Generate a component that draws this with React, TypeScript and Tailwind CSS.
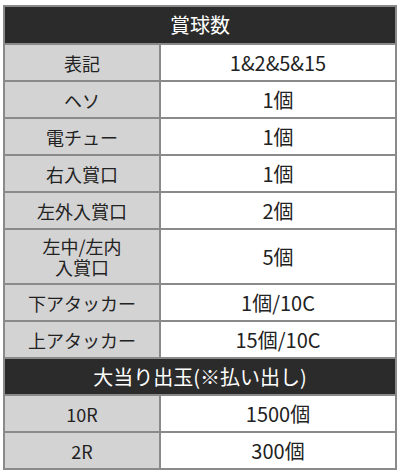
import React from "react";

const rows1: { label: React.ReactNode; value: string; tall?: boolean }[] = [
  { label: "表記", value: "1&2&5&15" },
  { label: "ヘソ", value: "1個" },
  { label: "電チュー", value: "1個" },
  { label: "右入賞口", value: "1個" },
  { label: "左外入賞口", value: "2個" },
  {
    label: (
      <span className="flex flex-col items-center gap-[1px] leading-[20px]">
        <span>左中/左内</span>
        <span>入賞口</span>
      </span>
    ),
    value: "5個",
    tall: true,
  },
  { label: "下アタッカー", value: "1個/10C" },
  { label: "上アタッカー", value: "15個/10C" },
];

const rows2 = [
  { label: "10R", value: "1500個" },
  { label: "2R", value: "300個" },
];

function Header({ children, h }: { children: React.ReactNode; h: string }) {
  return (
    <tr className={h}>
      <th
        colSpan={2}
        className="border-2 border-[#8a8a8a] bg-[#2b2b2b] text-white text-[20px] font-normal leading-none text-center"
      >
        {children}
      </th>
    </tr>
  );
}

function Row({ label, value, tall }: { label: React.ReactNode; value: string; tall?: boolean }) {
  return (
    <tr className={tall ? "h-[55px]" : "h-[37px]"}>
      <td className="border-2 border-[#8a8a8a] bg-[#d3d3d3] text-center text-[18px] leading-[20px] text-[#222222]">
        {label}
      </td>
      <td className="border-2 border-[#8a8a8a] bg-white text-center text-[20px] leading-[22px] text-[#222222]">
        {value}
      </td>
    </tr>
  );
}

export default function App() {
  return (
    <div
      className="w-[400px] h-[475px] bg-white pl-[3px] pt-[5px]"
      style={{ fontFamily: '"Noto Sans CJK JP", "Noto Sans", sans-serif' }}
    >
      <table className="w-[392px] border-collapse table-fixed">
        <colgroup>
          <col className="w-[156px]" />
          <col className="w-[236px]" />
        </colgroup>
        <tbody>
          <Header h="h-[38px]">賞球数</Header>
          {rows1.map((r, i) => (
            <Row key={i} label={r.label} value={r.value} tall={r.tall} />
          ))}
          <Header h="h-[37px]">大当り出玉(※払い出し)</Header>
          {rows2.map((r, i) => (
            <Row key={i} label={r.label} value={r.value} />
          ))}
        </tbody>
      </table>
    </div>
  );
}
